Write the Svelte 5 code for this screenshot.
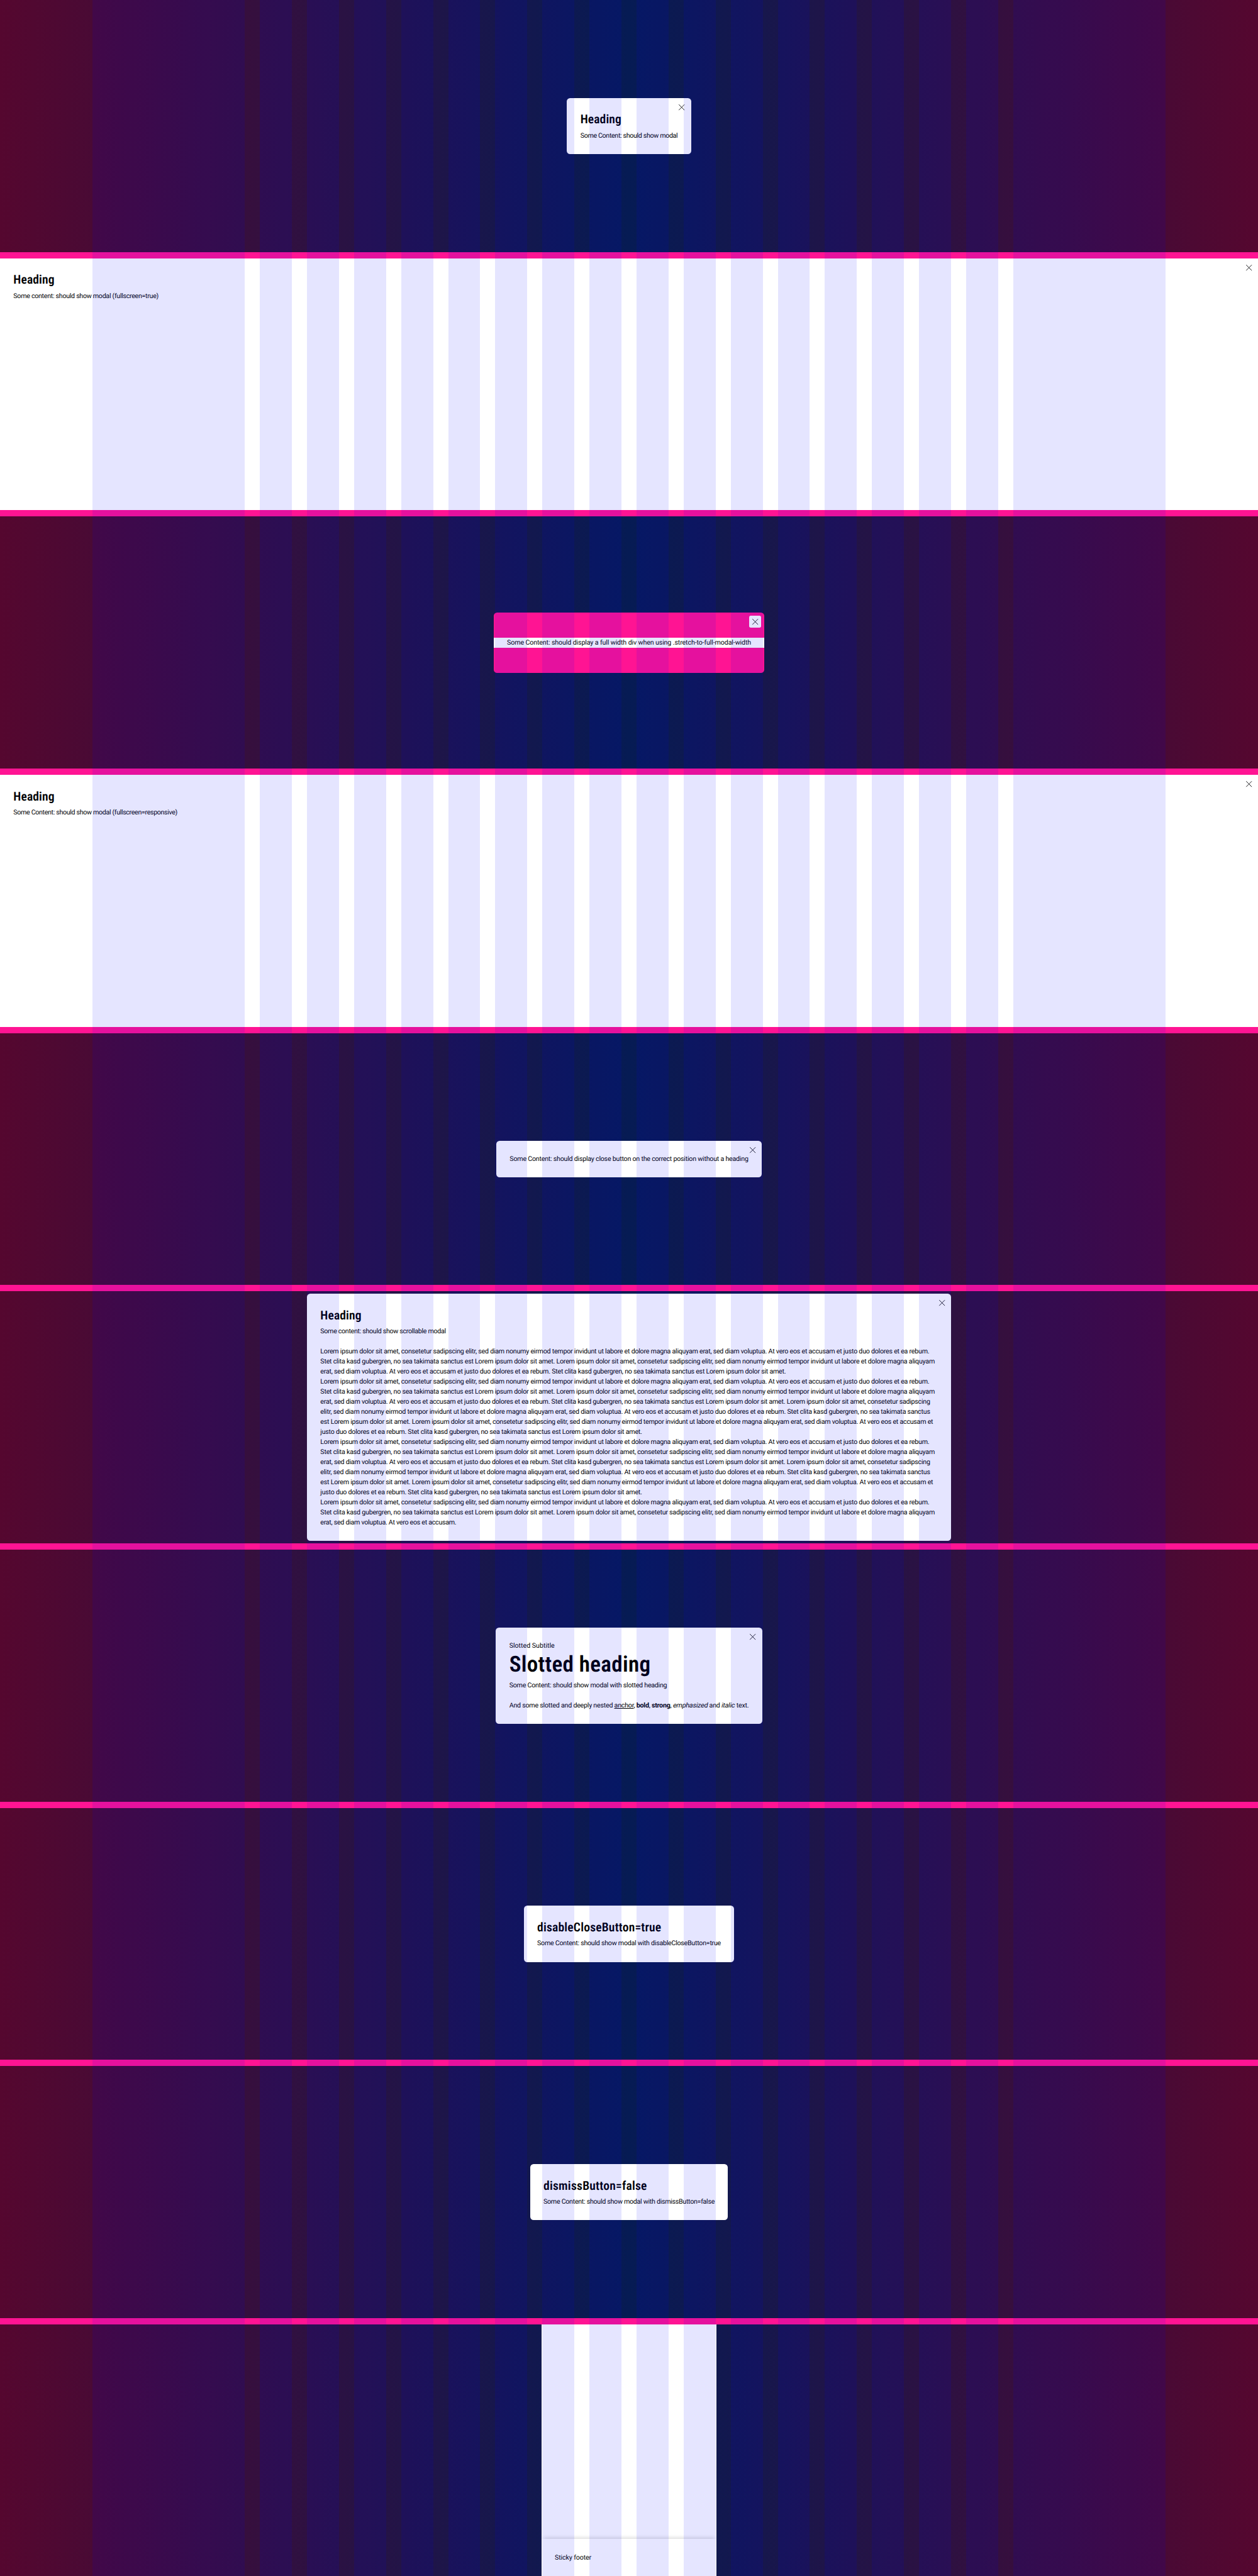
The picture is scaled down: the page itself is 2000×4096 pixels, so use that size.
<script>
  const columns = Array.from({ length: 18 });

  const lineA = 'Lorem ipsum dolor sit amet, consetetur sadipscing elitr, sed diam nonumy eirmod tempor invidunt ut labore et dolore magna aliquyam erat, sed diam voluptua. At vero eos et accusam et justo duo dolores et ea rebum.';
  const lineB = 'Stet clita kasd gubergren, no sea takimata sanctus est Lorem ipsum dolor sit amet. Lorem ipsum dolor sit amet, consetetur sadipscing elitr, sed diam nonumy eirmod tempor invidunt ut labore et dolore magna aliquyam';
  const lineC = 'erat, sed diam voluptua. At vero eos et accusam et justo duo dolores et ea rebum. Stet clita kasd gubergren, no sea takimata sanctus est Lorem ipsum dolor sit amet.';
  const long = [
    [lineA, 1452],
    [lineB, 1465],
    [lineC + ' Lorem ipsum dolor sit amet, consetetur sadipscing', 1454],
    ['elitr, sed diam nonumy eirmod tempor invidunt ut labore et dolore magna aliquyam erat, sed diam voluptua. At vero eos et accusam et justo duo dolores et ea rebum. Stet clita kasd gubergren, no sea takimata sanctus', 1454],
    ['est Lorem ipsum dolor sit amet. Lorem ipsum dolor sit amet, consetetur sadipscing elitr, sed diam nonumy eirmod tempor invidunt ut labore et dolore magna aliquyam erat, sed diam voluptua. At vero eos et accusam et', 1461],
    ['justo duo dolores et ea rebum. Stet clita kasd gubergren, no sea takimata sanctus est Lorem ipsum dolor sit amet.', 767]
  ];
  const lorem = [
    [lineA, 1452],
    [lineB, 1465],
    [lineC, 1110],
    ...long,
    ...long,
    [lineA, 1452],
    [lineB, 1465],
    ['erat, sed diam voluptua. At vero eos et accusam.', 324]
  ];

  // Tracks a line of text so that it takes up the given share of the page width.
  function fit(node, width) {
    const page = node.closest('.page').getBoundingClientRect().width;
    const target = (width / 3000) * page;
    const measure = (spacing) => {
      node.style.letterSpacing = spacing + 'px';
      return node.getBoundingClientRect().width;
    };
    const base = measure(0);
    const step = measure(1) - base;
    measure((target - base) / step);
  }
</script>

{#snippet close()}
  <button class="close" aria-label="Dismiss modal">
    <svg viewBox="0 0 14 14" width="14" height="14">
      <path d="M.3 .3 13.7 13.7M13.7 .3 .3 13.7" fill="none" stroke="#010205" stroke-width="1.3" />
    </svg>
  </button>
{/snippet}

{#snippet text(content, width)}
  <p><span class="line" use:fit={width}>{content}</span></p>
{/snippet}

{#snippet title(content, width)}
  <h2><span class="line" use:fit={width}>{content}</span></h2>
{/snippet}

<div class="page">
  <section>
    <div class="modal w1">
      {@render close()}
      {@render title('Heading', 98)}
      {@render text('Some Content: should show modal', 232)}
    </div>
  </section>

  <section>
    <div class="modal fullscreen">
      {@render close()}
      {@render title('Heading', 98)}
      {@render text('Some content: should show modal (fullscreen=true)', 346)}
    </div>
  </section>

  <section>
    <div class="modal pink w3">
      {@render close()}
      <div class="stretch">{@render text('Some Content: should display a full width div when using .stretch-to-full-modal-width', 582)}</div>
    </div>
  </section>

  <section>
    <div class="modal fullscreen">
      {@render close()}
      {@render title('Heading', 98)}
      {@render text('Some Content: should show modal (fullscreen=responsive)', 391)}
    </div>
  </section>

  <section>
    <div class="modal w5">
      {@render close()}
      {@render text('Some Content: should display close button on the correct position without a heading', 569)}
    </div>
  </section>

  <section>
    <div class="modal w6">
      {@render close()}
      {@render title('Heading', 98)}
      {@render text('Some content: should show scrollable modal', 299)}
      <div class="block">
        {#each lorem as [content, width]}
          {@render text(content, width)}
        {/each}
      </div>
    </div>
  </section>

  <section>
    <div class="modal w7">
      {@render close()}
      {@render text('Slotted Subtitle', 108)}
      <h1><span class="line" use:fit={337}>Slotted heading</span></h1>
      {@render text('Some Content: should show modal with slotted heading', 376)}
      <p class="block">
        <span class="line" use:fit={571}>And some slotted and deeply nested <u>anchor</u>, <b>bold</b>, <strong>strong</strong>, <em>emphasized</em> and <i>italic</i> text.</span>
      </p>
    </div>
  </section>

  <section>
    <div class="modal w8">
      {@render title('disableCloseButton=true', 296)}
      {@render text('Some Content: should show modal with disableCloseButton=true', 438)}
    </div>
  </section>

  <section>
    <div class="modal w9">
      {@render title('dismissButton=false', 247)}
      {@render text('Some Content: should show modal with dismissButton=false', 408)}
    </div>
  </section>

  <section class="last">
    <div class="sheet">
      <footer>{@render text('Sticky footer', 87)}</footer>
    </div>
  </section>

  <div class="grid" aria-hidden="true">
    {#each columns as _}<div></div>{/each}
  </div>
</div>

<style>
  :global(body) {
    margin: 0;
  }
  .page {
    zoom: 0.6666667;
    position: relative;
    width: 3000px;
    height: 6144px;
    overflow: hidden;
    font: 400 16px/24px Roboto, 'Liberation Sans', sans-serif;
    color: #010205;
    text-rendering: geometricPrecision;
  }
  section {
    box-sizing: border-box;
    display: flex;
    align-items: center;
    justify-content: center;
    height: 616px;
    border-bottom: 16px solid #ff1493;
    background: linear-gradient(90deg, #55072f 0%, #061b54 50%, #55072f 100%);
  }
  .last {
    height: 600px;
    border-bottom: 0;
  }
  .modal {
    box-sizing: border-box;
    position: relative;
    padding: 32px;
    border-radius: 8px;
    background: #fff;
  }
  .w1 { width: 296px; }
  .w3 { width: 646px; }
  .w5 { width: 633px; }
  .w6 { width: 1536px; }
  .w7 { width: 635px; }
  .w8 { width: 502px; }
  .w9 { width: 472px; }
  .fullscreen {
    width: 100%;
    height: 100%;
    border-radius: 0;
  }
  .pink {
    padding: 60px 0;
    background: #ff1493;
  }
  .stretch {
    padding: 0 32px;
    background: #fff;
  }
  p,
  h1,
  h2 {
    margin: 0;
    white-space: nowrap;
  }
  h1,
  h2 {
    padding-top: 2px;
    margin-bottom: 8px;
    font-weight: 600;
    font-stretch: 87.5%;
  }
  h2 {
    font-size: 29.3px;
    line-height: 36px;
  }
  h1 {
    font-size: 52.7px;
    line-height: 60px;
  }
  .line {
    display: inline-block;
    vertical-align: top;
  }
  .block {
    margin-top: 24px;
  }
  u {
    text-underline-offset: 2px;
  }
  em,
  i {
    display: inline-block;
    font-style: normal;
    transform: skewX(-11deg);
  }
  .close {
    position: absolute;
    top: 8px;
    right: 8px;
    display: flex;
    align-items: center;
    justify-content: center;
    width: 28px;
    height: 28px;
    padding: 0;
    border: 0;
    border-radius: 4px;
    background: #fff;
  }
  .close svg {
    overflow: visible;
  }
  .sheet {
    display: flex;
    flex-direction: column;
    justify-content: flex-end;
    width: 418px;
    height: 600px;
    overflow: hidden;
    background: #fff;
  }
  footer {
    padding: 32px;
    box-shadow: 0 -6px 10px -5px rgba(0, 0, 0, 0.18);
    background: #fff;
  }
  .grid {
    position: absolute;
    inset: 0;
    display: grid;
    grid-template-columns: 364px repeat(16, 1fr) 364px;
    gap: 36px;
    padding: 0 220px;
    pointer-events: none;
  }
  .grid div {
    background: rgba(0, 0, 255, 0.1);
  }
</style>
